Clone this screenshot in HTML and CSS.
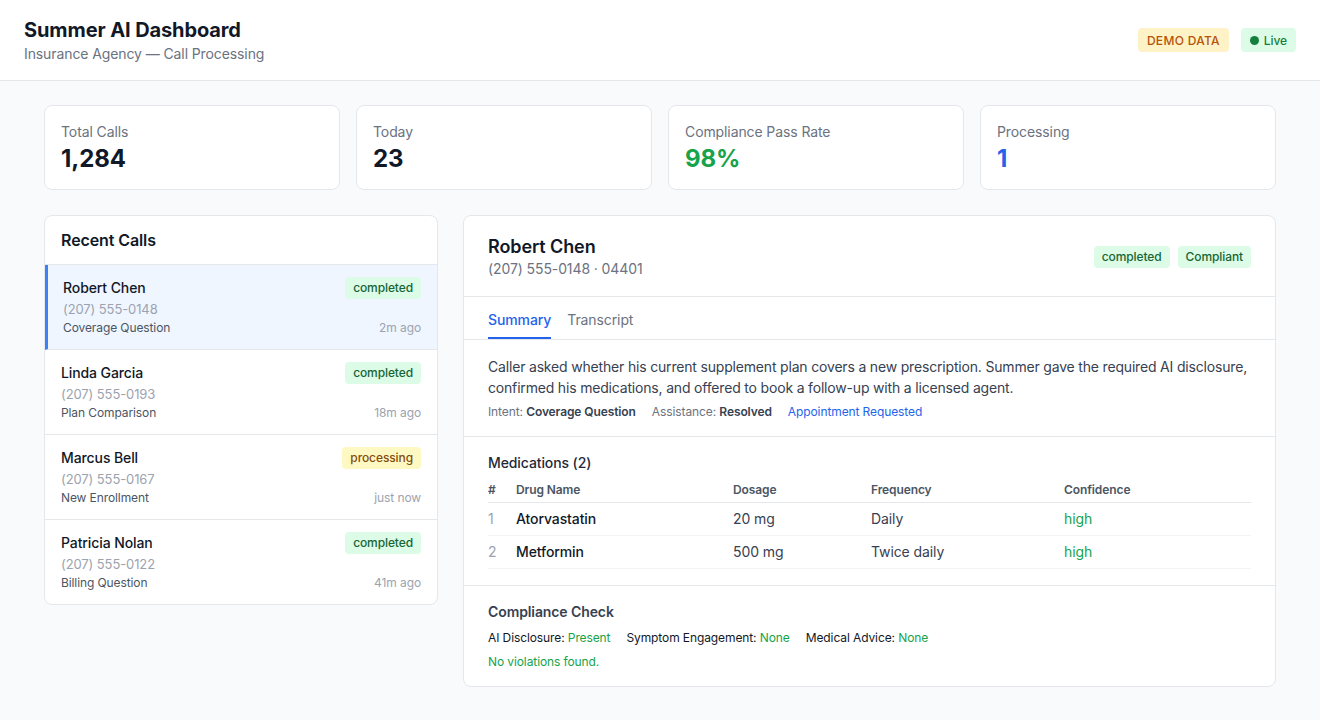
FILE: index.html
```html
<!DOCTYPE html>
<html lang="en">
<head>
    <meta charset="UTF-8">
    <meta name="viewport" content="width=device-width, initial-scale=1.0">
    <title>Summer AI Dashboard</title>
    <link rel="stylesheet" href="styles.css">
</head>
<body>
    <!-- top bar -->
    <header class="topbar">
        <div>
            <h1>Summer AI Dashboard</h1>
            <p class="subtitle">Insurance Agency — Call Processing</p>
        </div>
        <div class="topbar-tags">
            <span class="tag tag-demo">DEMO DATA</span>
            <span class="tag tag-live"><span class="dot"></span>Live</span>
        </div>
    </header>

    <main class="content">
        <!-- stats -->
        <section class="stats">
            <div class="card stat">
                <div class="stat-label">Total Calls</div>
                <div class="stat-value">1,284</div>
            </div>
            <div class="card stat">
                <div class="stat-label">Today</div>
                <div class="stat-value">23</div>
            </div>
            <div class="card stat">
                <div class="stat-label">Compliance Pass Rate</div>
                <div class="stat-value green">98%</div>
            </div>
            <div class="card stat">
                <div class="stat-label">Processing</div>
                <div class="stat-value blue">1</div>
            </div>
        </section>

        <section class="columns">
            <!-- recent calls -->
            <div class="card calls">
                <h2 class="calls-title">Recent Calls</h2>
                <ul class="call-list">
                    <li class="call active">
                        <div class="call-row">
                            <span class="call-name">Robert Chen</span>
                            <span class="badge badge-green">completed</span>
                        </div>
                        <div class="call-phone">(207) 555-0148</div>
                        <div class="call-row">
                            <span class="call-topic">Coverage Question</span>
                            <span class="call-time">2m ago</span>
                        </div>
                    </li>
                    <li class="call">
                        <div class="call-row">
                            <span class="call-name">Linda Garcia</span>
                            <span class="badge badge-green">completed</span>
                        </div>
                        <div class="call-phone">(207) 555-0193</div>
                        <div class="call-row">
                            <span class="call-topic">Plan Comparison</span>
                            <span class="call-time">18m ago</span>
                        </div>
                    </li>
                    <li class="call">
                        <div class="call-row">
                            <span class="call-name">Marcus Bell</span>
                            <span class="badge badge-yellow">processing</span>
                        </div>
                        <div class="call-phone">(207) 555-0167</div>
                        <div class="call-row">
                            <span class="call-topic">New Enrollment</span>
                            <span class="call-time">just now</span>
                        </div>
                    </li>
                    <li class="call">
                        <div class="call-row">
                            <span class="call-name">Patricia Nolan</span>
                            <span class="badge badge-green">completed</span>
                        </div>
                        <div class="call-phone">(207) 555-0122</div>
                        <div class="call-row">
                            <span class="call-topic">Billing Question</span>
                            <span class="call-time">41m ago</span>
                        </div>
                    </li>
                </ul>
            </div>

            <!-- call detail -->
            <div class="card detail">
                <div class="detail-head">
                    <div>
                        <h2 class="detail-name">Robert Chen</h2>
                        <div class="detail-sub">(207) 555-0148 · 04401</div>
                    </div>
                    <div class="detail-badges">
                        <span class="badge badge-green">completed</span>
                        <span class="badge badge-green">Compliant</span>
                    </div>
                </div>

                <nav class="tabs">
                    <span class="tab active">Summary</span>
                    <span class="tab">Transcript</span>
                </nav>

                <div class="block">
                    <p class="summary">Caller asked whether his current supplement plan covers a new prescription. Summer gave the required AI disclosure, confirmed his medications, and offered to book a follow-up with a licensed agent.</p>
                    <div class="meta">
                        <span>Intent: <b>Coverage Question</b></span>
                        <span>Assistance: <b>Resolved</b></span>
                        <span class="link">Appointment Requested</span>
                    </div>
                </div>

                <div class="block">
                    <h3 class="block-title">Medications (2)</h3>
                    <table class="meds">
                        <colgroup>
                            <col style="width: 28px">
                            <col style="width: 217px">
                            <col style="width: 138px">
                            <col style="width: 193px">
                            <col>
                        </colgroup>
                        <thead>
                            <tr>
                                <th>#</th>
                                <th>Drug Name</th>
                                <th>Dosage</th>
                                <th>Frequency</th>
                                <th>Confidence</th>
                            </tr>
                        </thead>
                        <tbody>
                            <tr>
                                <td class="num">1</td>
                                <td class="drug">Atorvastatin</td>
                                <td>20 mg</td>
                                <td>Daily</td>
                                <td class="green">high</td>
                            </tr>
                            <tr>
                                <td class="num">2</td>
                                <td class="drug">Metformin</td>
                                <td>500 mg</td>
                                <td>Twice daily</td>
                                <td class="green">high</td>
                            </tr>
                        </tbody>
                    </table>
                </div>

                <div class="block last">
                    <h3 class="block-title dark">Compliance Check</h3>
                    <div class="checks">
                        <span>AI Disclosure: <em>Present</em></span>
                        <span>Symptom Engagement: <em>None</em></span>
                        <span>Medical Advice: <em>None</em></span>
                    </div>
                    <p class="ok">No violations found.</p>
                </div>
            </div>
        </section>
    </main>
</body>
</html>
```

FILE: styles.css
```css
* {
    box-sizing: border-box;
}

body {
    margin: 0;
    background-color: #f9fafb;
    font-family: Inter, 'Noto Sans', sans-serif;
    letter-spacing: -0.1px;
    color: #111827;
}

h1, h2, h3, p, ul {
    margin: 0;
    padding: 0;
}

.topbar {
    display: flex;
    justify-content: space-between;
    align-items: center;
    background-color: #fff;
    border-bottom: 1px solid #e5e7eb;
    padding: 16px 24px;
}

.topbar h1 {
    font-size: 20px;
    line-height: 28px;
    font-weight: 700;
}

.subtitle {
    font-size: 14px;
    line-height: 20px;
    color: #6b7280;
}

.topbar-tags {
    display: flex;
    gap: 12px;
}

.tag {
    display: inline-flex;
    align-items: center;
    gap: 5px;
    height: 24px;
    padding: 0 9px;
    border-radius: 4px;
    font-size: 12px;
    font-weight: 500;
}

.tag-demo {
    background-color: #fef3c7;
    color: #b45309;
    letter-spacing: 0.3px;
}

.tag-live {
    background-color: #dcfce7;
    color: #15803d;
}

.dot {
    width: 9px;
    height: 9px;
    border-radius: 50%;
    background-color: #15803d;
}

.content {
    padding: 24px 44px;
}

.card {
    background-color: #fff;
    border: 1px solid #e5e7eb;
    border-radius: 8px;
}

.stats {
    display: grid;
    grid-template-columns: repeat(4, 1fr);
    gap: 16px;
}

.stat {
    padding: 16px;
    height: 85px;
}

.stat-label {
    font-size: 14px;
    line-height: 20px;
    color: #6b7280;
}

.stat-value {
    font-size: 24px;
    line-height: 32px;
    font-weight: 700;
    margin-top: 1px;
}

.green {
    color: #16a34a;
}

.blue {
    color: #2563eb;
}

.columns {
    display: grid;
    grid-template-columns: 394px 1fr;
    gap: 25px;
    align-items: start;
    margin-top: 25px;
}

/* recent calls */
.calls {
    overflow: hidden;
}

.calls-title {
    font-size: 16px;
    line-height: 24px;
    font-weight: 600;
    padding: 12px 16px;
    border-bottom: 1px solid #e5e7eb;
}

.call-list {
    list-style: none;
}

.call {
    padding: 12px 16px;
    border-bottom: 1px solid #e5e7eb;
}

.call:last-child {
    border-bottom: none;
}

.call.active {
    background-color: #eff6ff;
    border-left: 3px solid #3b82f6;
    padding-left: 15px;
}

.call-row {
    display: flex;
    justify-content: space-between;
    align-items: center;
}

.call-name {
    font-size: 14px;
    font-weight: 500;
    line-height: 22px;
}

.call-phone {
    font-size: 13px;
    line-height: 18px;
    color: #9ca3af;
    margin: 1px 0;
}

.call-topic {
    font-size: 12px;
    line-height: 18px;
    color: #4b5563;
}

.call-time {
    font-size: 12px;
    line-height: 18px;
    color: #9ca3af;
}

.badge {
    display: inline-block;
    font-size: 12px;
    line-height: 22px;
    font-weight: 500;
    padding: 0 8px;
    border-radius: 4px;
}

.badge-green {
    background-color: #dcfce7;
    color: #166534;
}

.badge-yellow {
    background-color: #fef9c3;
    color: #854d0e;
}

/* detail */
.detail-head {
    display: flex;
    justify-content: space-between;
    align-items: center;
    padding: 19px 24px 17px;
    border-bottom: 1px solid #e5e7eb;
}

.detail-name {
    font-size: 18px;
    line-height: 24px;
    font-weight: 600;
}

.detail-sub {
    font-size: 14px;
    line-height: 20px;
    color: #6b7280;
}

.detail-badges {
    display: flex;
    gap: 8px;
}

.tabs {
    display: flex;
    gap: 16px;
    padding: 0 24px;
    border-bottom: 1px solid #e5e7eb;
}

.tab {
    font-size: 14px;
    line-height: 20px;
    padding: 13px 0 7px;
    color: #6b7280;
    border-bottom: 2px solid transparent;
}

.tab.active {
    color: #2563eb;
    font-weight: 500;
    border-bottom-color: #2563eb;
}

.block {
    padding: 16px 24px;
    border-bottom: 1px solid #e5e7eb;
}

.block.last {
    border-bottom: none;
}

.summary {
    font-size: 14px;
    line-height: 21px;
    letter-spacing: -0.18px;
    color: #374151;
}

.meta {
    display: flex;
    gap: 16px;
    margin-top: 6px;
    font-size: 12px;
    line-height: 16px;
    color: #6b7280;
}

.meta b {
    color: #374151;
    font-weight: 600;
}

.link {
    color: #2563eb;
}

.block-title {
    font-size: 14px;
    line-height: 20px;
    font-weight: 500;
    color: #1f2937;
}

.block-title.dark {
    font-weight: 600;
    color: #374151;
}

.meds {
    width: 100%;
    border-collapse: collapse;
    table-layout: fixed;
    margin-top: 9px;
}

.meds th {
    text-align: left;
    font-size: 12px;
    line-height: 16px;
    font-weight: 600;
    color: #4b5563;
    padding: 0 0 4px;
    border-bottom: 1px solid #e5e7eb;
}

.meds td {
    font-size: 14px;
    line-height: 20px;
    padding: 6px 0;
    color: #374151;
    border-bottom: 1px solid #f3f4f6;
}

.meds td.num {
    color: #9ca3af;
}

.meds td.drug {
    color: #111827;
    font-weight: 500;
}

.meds td.green {
    color: #16a34a;
}

.checks {
    display: flex;
    gap: 16px;
    margin-top: 8px;
    font-size: 12px;
    line-height: 16px;
    color: #111827;
}

.checks em {
    font-style: normal;
    color: #16a34a;
}

.ok {
    margin-top: 8px;
    font-size: 12px;
    line-height: 16px;
    color: #16a34a;
}
```
